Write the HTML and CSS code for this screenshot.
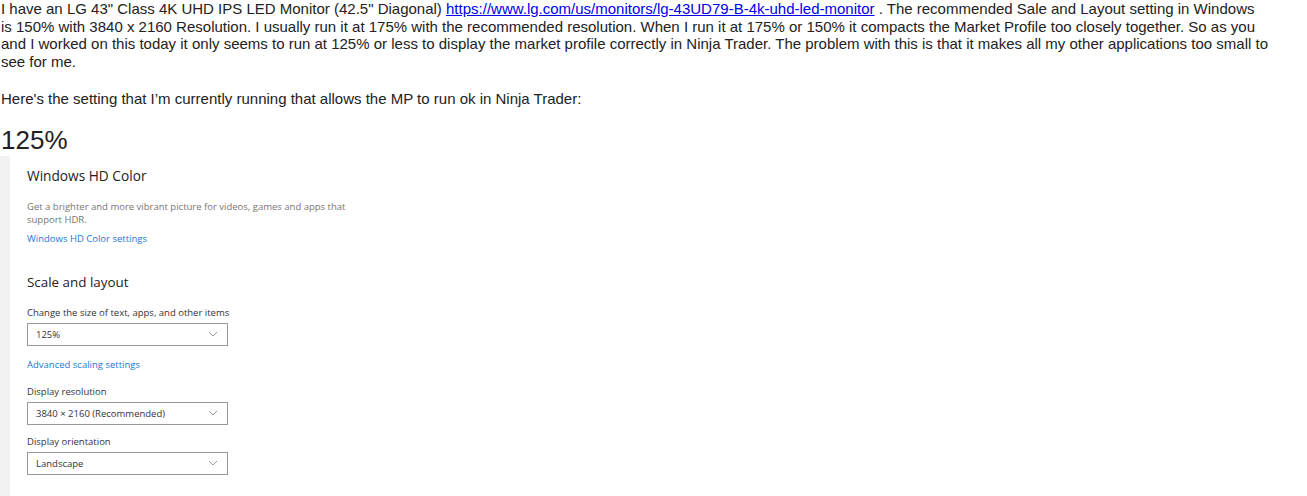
FILE: index.html
```html
<!DOCTYPE html>
<html lang="en">
<head>
  <meta charset="UTF-8">
  <title>Scaling question</title>
  <link rel="stylesheet" href="styles.css">
</head>
<body>
  <div class="post">
    <p class="msg">I have an LG 43" Class 4K UHD IPS LED Monitor (42.5" Diagonal) <a href="https://www.lg.com/us/monitors/lg-43UD79-B-4k-uhd-led-monitor">https://www.lg.com/us/monitors/lg-43UD79-B-4k-uhd-led-monitor</a> . The recommended Sale and Layout setting in Windows is 150% with 3840 x 2160 Resolution. I usually run it at 175% with the recommended resolution. When I run it at 175% or 150% it compacts the Market Profile too closely together. So as you and I worked on this today it only seems to run at 125% or less to display the market profile correctly in Ninja Trader. The problem with this is that it makes all my other applications too small to see for me.</p>
    <p class="msg">Here's the setting that I’m currently running that allows the MP to run ok in Ninja Trader:</p>
    <div class="big">125%</div>

    <div class="shot">
      <div class="rail"></div>
      <div class="pane">
        <div class="group">
          <h3>Windows HD Color</h3>
          <p class="desc">Get a brighter and more vibrant picture for videos, games and apps that support HDR.</p>
          <a class="link" href="#">Windows HD Color settings</a>
        </div>
        <div class="group">
          <h3>Scale and layout</h3>
          <div class="label">Change the size of text, apps, and other items</div>
          <div class="select"><span>125%</span><svg width="10" height="6" viewBox="0 0 10 6"><path d="M1 1l4 4 4-4" fill="none" stroke="#999" stroke-width="1"/></svg></div>
          <a class="link gap" href="#">Advanced scaling settings</a>
          <div class="label">Display resolution</div>
          <div class="select"><span>3840 × 2160 (Recommended)</span><svg width="10" height="6" viewBox="0 0 10 6"><path d="M1 1l4 4 4-4" fill="none" stroke="#999" stroke-width="1"/></svg></div>
          <div class="label">Display orientation</div>
          <div class="select"><span>Landscape</span><svg width="10" height="6" viewBox="0 0 10 6"><path d="M1 1l4 4 4-4" fill="none" stroke="#999" stroke-width="1"/></svg></div>
        </div>
      </div>
    </div>
  </div>
</body>
</html>
```

FILE: styles.css
```css
body { margin: 0; padding: 0; background: #fff; font-family: "Liberation Sans", Arial, sans-serif; color: #222; }
.post { padding: 0 0 0 1px; width: 1267px; }
.msg { font-size: 15px; line-height: 17.5px; margin: 0 0 20px; }
.msg a { color: #0000ee; }
.big { font-size: 26px; line-height: 30px; margin-top: -3px; }
.shot { display: flex; height: 341px; margin-top: 1px; margin-left: -1px; }
.rail { width: 10px; background: #f2f2f2; }
.pane { padding: 10px 0 0 17px; font-family: "Open Sans", sans-serif; width: 345px; }
.group { margin-bottom: 28px; }
h3 { font-size: 13.7px; font-weight: 400; color: #222; margin: 0 0 15px; }
.group + .group h3 { font-size: 13.4px; }
.desc { font-size: 9.5px; line-height: 13px; color: #767676; margin: 0 0 6px; width: 340px; }
.link { display: block; font-size: 9.5px; color: #1a78d4; text-decoration: none; }
.link.gap { margin: 12px 0 14px; }
.label { font-size: 9.5px; color: #333; margin-bottom: 4px; }
.select { width: 201px; height: 23px; border: 1.5px solid #999; box-sizing: border-box; display: flex; align-items: center; justify-content: space-between; padding: 0 9px 0 8px; font-size: 9.5px; color: #333; margin-top: 2px; margin-bottom: 10px; }
```
